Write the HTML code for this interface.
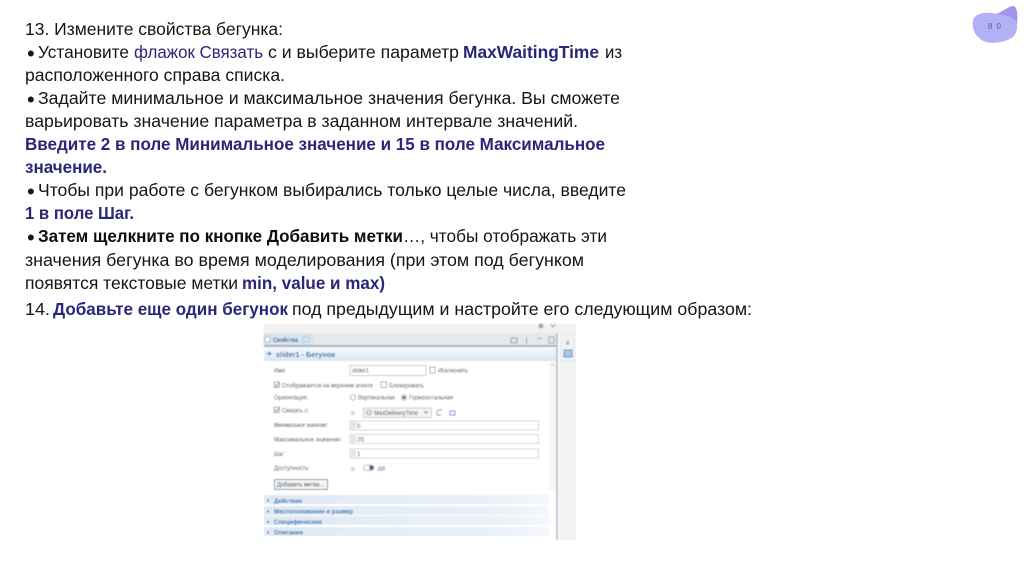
<!DOCTYPE html>
<html lang="ru"><head><meta charset="utf-8"><title>Slide 80</title>
<style>
html,body{margin:0;padding:0;background:#fff;width:1024px;height:574px;overflow:hidden}
svg{display:block;position:absolute;left:0;top:0}
.t{font-family:"Liberation Sans",sans-serif;font-size:17.5px;fill:#141414}
.d{font-family:"Liberation Sans",sans-serif;font-size:22px;fill:#141414}
.b{font-weight:bold}
.v{fill:#2b2678}
.s{font-family:"Liberation Sans",sans-serif;font-size:6.4px;fill:#3c3c3c}
.h{font-family:"Liberation Sans",sans-serif;font-size:6.4px;font-weight:bold;fill:#2f72ad}
.f{fill:#fff;stroke:#c4c4c4;stroke-width:.7}
</style></head><body>
<svg width="1024" height="574" viewBox="0 0 1024 574" xmlns="http://www.w3.org/2000/svg">
<defs>
<filter id="b1" x="-2%" y="-2%" width="104%" height="104%"><feGaussianBlur stdDeviation="0.25"/></filter>
<filter id="b2" x="-2%" y="-2%" width="104%" height="104%"><feGaussianBlur stdDeviation="0.4"/></filter>
<linearGradient id="hd" x1="0" y1="0" x2="0" y2="1"><stop offset="0" stop-color="#f6f9fc"/><stop offset="1" stop-color="#d9e6f2"/></linearGradient>
<linearGradient id="sec" x1="0" y1="0" x2="1" y2="0"><stop offset="0" stop-color="#dfe9f4"/><stop offset=".8" stop-color="#e9f0f7"/><stop offset="1" stop-color="#f5f8fb"/></linearGradient>
</defs>

<!-- page badge -->
<path d="M996 14 C1004 11 1009 6 1013 6 C1017 6 1018 14 1017 24 L1000 22 Z" fill="#9d96ec"/>
<path d="M973 20 C975 14 983 12 991 13 C999 14 1010 15 1015 20 C1018 24 1018 32 1013 37 C1006 42 995 44 986 42 C977 39 971 30 973 20 Z" fill="#b4b0f4"/>
<text x="988" y="29" font-family="'Liberation Sans',sans-serif" font-size="8" fill="#5f59b0" textLength="13">8 0</text>

<!-- main text -->
<g filter="url(#b1)">
<text class="t" x="25" y="35" textLength="258" lengthAdjust="spacingAndGlyphs">13. Измените свойства бегунка:</text>

<text class="d" x="27" y="61">•</text>
<text class="t" x="38" y="58" textLength="91" lengthAdjust="spacingAndGlyphs">Установите</text>
<text class="t v" x="134" y="58" textLength="129" lengthAdjust="spacingAndGlyphs">флажок Связать</text>
<text class="t" x="268" y="58" textLength="191" lengthAdjust="spacingAndGlyphs">с и выберите параметр</text>
<text class="t b v" x="463" y="58" textLength="136" lengthAdjust="spacingAndGlyphs">MaxWaitingTime</text>
<text class="t" x="605" y="58" textLength="17" lengthAdjust="spacingAndGlyphs">из</text>

<text class="t" x="25" y="81" textLength="260" lengthAdjust="spacingAndGlyphs">расположенного справа списка.</text>
<text class="d" x="27" y="107">•</text>
<text class="t" x="38" y="104" textLength="582" lengthAdjust="spacingAndGlyphs">Задайте минимальное и максимальное значения бегунка. Вы сможете</text>
<text class="t" x="25" y="127" textLength="553" lengthAdjust="spacingAndGlyphs">варьировать значение параметра в заданном интервале значений.</text>
<text class="t b v" x="25" y="150" textLength="580" lengthAdjust="spacingAndGlyphs">Введите 2 в поле Минимальное значение и 15 в поле Максимальное</text>
<text class="t b v" x="25" y="173" textLength="82" lengthAdjust="spacingAndGlyphs">значение.</text>
<text class="d" x="27" y="199">•</text>
<text class="t" x="38" y="196" textLength="588" lengthAdjust="spacingAndGlyphs">Чтобы при работе с бегунком выбирались только целые числа, введите</text>
<text class="t b v" x="25" y="219" textLength="109" lengthAdjust="spacingAndGlyphs">1 в поле Шаг.</text>

<text class="d" x="27" y="245">•</text>
<text class="t b" x="38" y="242" textLength="365" lengthAdjust="spacingAndGlyphs" style="fill:#0c0c0c">Затем щелкните по кнопке Добавить метки</text>
<text class="t" x="403" y="242" textLength="204" lengthAdjust="spacingAndGlyphs">…, чтобы отображать эти</text>

<text class="t" x="25" y="266" textLength="559" lengthAdjust="spacingAndGlyphs">значения бегунка во время моделирования (при этом под бегунком</text>
<text class="t" x="25" y="289" textLength="213" lengthAdjust="spacingAndGlyphs">появятся текстовые метки</text>
<text class="t b v" x="242" y="289" textLength="143" lengthAdjust="spacingAndGlyphs">min, value и max)</text>

<text class="t" x="25" y="315" textLength="25" lengthAdjust="spacingAndGlyphs">14.</text>
<text class="t b v" x="53" y="315" textLength="235" lengthAdjust="spacingAndGlyphs">Добавьте еще один бегунок</text>
<text class="t" x="292" y="315" textLength="460" lengthAdjust="spacingAndGlyphs">под предыдущим и настройте его следующим образом:</text>
</g>

<!-- embedded screenshot -->
<g filter="url(#b2)">
<rect x="264" y="324" width="312" height="216" fill="#f1f1f1"/>
<rect x="264" y="333" width="294" height="207" fill="#fff"/>
<rect x="264" y="333" width="294" height="12" fill="#e4e9ee"/>
<rect x="264" y="335" width="48" height="10" fill="#d7e6f3" stroke="#b9cfe2" stroke-width=".5"/>
<rect x="265" y="337" width="5" height="5" fill="#fff" stroke="#7fa3c4" stroke-width=".6"/>
<text class="s" x="273" y="342" textLength="25" lengthAdjust="spacingAndGlyphs" style="font-weight:bold;fill:#4a5a68">Свойства</text>
<rect x="303" y="337" width="6" height="5" fill="none" stroke="#9dbbd4" stroke-width=".6"/>
<rect x="264" y="345" width="294" height="2" fill="#a9b4bd"/>
<rect x="264" y="347" width="292" height="14" fill="url(#hd)"/>
<path d="M266 353.500h5M268.500 351.500l2.500 2-2.500 2" stroke="#5b7f9e" fill="none" stroke-width="1"/>
<text x="276" y="357" font-family="'Liberation Sans',sans-serif" font-size="7.500" font-weight="bold" fill="#2f70aa" textLength="59" lengthAdjust="spacingAndGlyphs">slider1 - Бегунок</text>
<!-- toolbar icons -->
<rect x="511" y="338" width="6" height="5" fill="#dfe7d8" stroke="#6d8c78" stroke-width=".7"/>
<rect x="526" y="337" width="1" height="7" fill="#aaa"/>
<rect x="537" y="338" width="5" height="1" fill="#9aa"/>
<rect x="549" y="337" width="5" height="6" fill="none" stroke="#8c9aa5" stroke-width=".8"/>
<circle cx="541" cy="326" r="2.500" fill="#b5a68e"/>
<path d="M551 324l2 3 2-3" stroke="#7da97d" fill="none" stroke-width="1"/>
<!-- divider and side -->
<rect x="556" y="333" width="2" height="207" fill="#bcc6cd"/>
<rect x="558" y="333" width="2" height="207" fill="#fbfbfb"/>
<rect x="560" y="334" width="15" height="206" fill="#f1f3f4"/>
<rect x="561" y="335" width="13" height="26" fill="#eef2f5" stroke="#d6dde2" stroke-width=".5"/>
<text x="566" y="345" font-family="'Liberation Sans',sans-serif" font-size="6" fill="#445">#</text>
<rect x="564" y="350" width="8" height="7" fill="#a9c9e4" stroke="#4f86b3" stroke-width=".8"/>
<!-- scrollbar -->
<rect x="550" y="361" width="6" height="129" fill="#f7f7f7"/>
<path d="M551 366l2-2 2 2" stroke="#bbb" fill="none" stroke-width=".7"/>

<!-- rows -->
<text class="s" x="274" y="372.500" textLength="12" lengthAdjust="spacingAndGlyphs">Имя:</text>
<rect class="f" x="350" y="365.500" width="76" height="10" style="stroke:#a9b4bd"/>
<text class="s" x="352" y="372.500" textLength="17" lengthAdjust="spacingAndGlyphs">slider1</text>
<rect x="430" y="367" width="5" height="6" fill="#fff" stroke="#777" stroke-width=".6"/>
<text class="s" x="438" y="372.500" textLength="30" lengthAdjust="spacingAndGlyphs">Исключить</text>

<rect x="274" y="382" width="5.500" height="5.500" fill="#f4f8f4" stroke="#777" stroke-width=".6"/>
<path d="M275 384.500l1.500 2 2.500-3.500" stroke="#4a7a4a" fill="none" stroke-width=".7"/>
<text class="s" x="282" y="387.500" textLength="91" lengthAdjust="spacingAndGlyphs">Отображается на верхнем агенте</text>
<rect x="381" y="382" width="5.500" height="5.500" fill="#fff" stroke="#777" stroke-width=".6"/>
<text class="s" x="389" y="387.500" textLength="35" lengthAdjust="spacingAndGlyphs">Блокировать</text>

<text class="s" x="274" y="399.500" textLength="34" lengthAdjust="spacingAndGlyphs">Ориентация:</text>
<circle cx="353" cy="397.500" r="2.700" fill="#fff" stroke="#777" stroke-width=".6"/>
<text class="s" x="358" y="399.500" textLength="37" lengthAdjust="spacingAndGlyphs">Вертикальная</text>
<circle cx="404" cy="397.500" r="2.700" fill="#fff" stroke="#777" stroke-width=".6"/>
<circle cx="404" cy="397.500" r="1.500" fill="#444"/>
<text class="s" x="409" y="399.500" textLength="44" lengthAdjust="spacingAndGlyphs">Горизонтальная</text>

<rect x="274" y="407" width="5.500" height="5.500" fill="#f4f8f4" stroke="#777" stroke-width=".6"/>
<path d="M275 409.500l1.500 2 2.500-3.500" stroke="#4a7a4a" fill="none" stroke-width=".7"/>
<text class="s" x="282" y="412.500" textLength="27" lengthAdjust="spacingAndGlyphs">Связать с:</text>
<path d="M351 412h4M351 414h4" stroke="#7f9fbf" stroke-width=".8"/>
<rect x="363.500" y="408" width="68" height="9.500" fill="#f4f4f4" stroke="#a9b4bd" stroke-width=".6"/>
<circle cx="369" cy="412.500" r="2.500" fill="#dde6ee" stroke="#66788a" stroke-width=".6"/>
<text class="s" x="374" y="415" textLength="44" lengthAdjust="spacingAndGlyphs">MaxDeliveryTime</text>
<path d="M424 411l2 2.500 2-2.500" stroke="#556" fill="none" stroke-width=".7"/>
<path d="M437 410v5h4M438 410h4" stroke="#4f9a6f" fill="none" stroke-width=".9"/>
<rect x="450" y="411" width="5" height="4" fill="none" stroke="#5a5ec0" stroke-width=".8"/>

<text class="s" x="274" y="427" textLength="54" lengthAdjust="spacingAndGlyphs">Минимальное значение:</text>
<rect class="f" x="350" y="421" width="188.500" height="9"/>
<rect x="351" y="422" width="5" height="7" fill="#e3e3e3"/>
<text class="s" x="357" y="428">5</text>

<text class="s" x="274" y="441.500" textLength="68" lengthAdjust="spacingAndGlyphs">Максимальное значение:</text>
<rect class="f" x="350" y="434.500" width="188.500" height="9"/>
<rect x="351" y="435.500" width="5" height="7" fill="#e3e3e3"/>
<text class="s" x="357" y="441.500">25</text>

<text class="s" x="274" y="456" textLength="11" lengthAdjust="spacingAndGlyphs">Шаг:</text>
<rect class="f" x="350" y="449" width="188.500" height="9"/>
<rect x="351" y="450" width="5" height="7" fill="#e3e3e3"/>
<text class="s" x="357" y="456">1</text>

<text class="s" x="274" y="470" textLength="36" lengthAdjust="spacingAndGlyphs">Доступность:</text>
<path d="M351 468h4M351 470h4" stroke="#7f9fbf" stroke-width=".8"/>
<rect x="363.500" y="465" width="10" height="5.500" rx="2.700" fill="#fff" stroke="#777" stroke-width=".6"/>
<circle cx="371.500" cy="467.700" r="2.500" fill="#4f6f8f"/>
<text class="s" x="378" y="470" textLength="7" lengthAdjust="spacingAndGlyphs">да</text>

<rect x="274.500" y="479.500" width="53" height="10" fill="#f5f5f5" stroke="#6f8ba3" stroke-width=".9"/>
<text class="s" x="277" y="486.500" textLength="47" lengthAdjust="spacingAndGlyphs" style="fill:#2a2a2a">Добавить метки...</text>

<!-- sections -->
<rect x="264" y="495" width="285" height="9" fill="url(#sec)"/>
<rect x="264" y="506" width="285" height="9" fill="url(#sec)"/>
<rect x="264" y="516" width="285" height="9" fill="url(#sec)"/>
<rect x="264" y="527" width="285" height="9" fill="url(#sec)"/>
<path d="M267.500 499l2 1.500-2 1.500zM267.500 510l2 1.500-2 1.500zM267.500 520.500l2 1.500-2 1.500zM267.500 531l2 1.500-2 1.500z" fill="#557"/>
<text class="h" x="274" y="503" textLength="28" lengthAdjust="spacingAndGlyphs">Действие</text>
<text class="h" x="274" y="513.500" textLength="79" lengthAdjust="spacingAndGlyphs">Местоположение и размер</text>
<text class="h" x="274" y="524" textLength="48" lengthAdjust="spacingAndGlyphs">Специфические</text>
<text class="h" x="274" y="534.500" textLength="29" lengthAdjust="spacingAndGlyphs">Описание</text>
</g>
</svg>
</body></html>
